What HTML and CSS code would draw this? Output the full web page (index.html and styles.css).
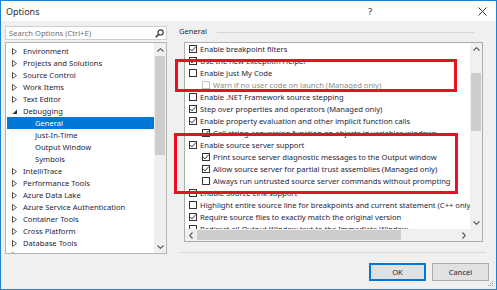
FILE: index.html
```html
<!DOCTYPE html>
<html>
<head>
  <title>Options</title>
  <link rel="stylesheet" href="styles.css">
</head>
<body>
  <div class="window">
    <div class="titlebar">
      <span class="title">Options</span>
      <span class="tb-help">?</span>
      <span class="tb-close">
        <svg width="9" height="9" viewBox="0 0 9 9"><path d="M0.5 0.5 L8.5 8.5 M8.5 0.5 L0.5 8.5" stroke="#333" stroke-width="1" fill="none"/></svg>
      </span>
    </div>

    <div class="main">
      <div class="left">
        <div class="search">
          <span class="search-text">Search Options (Ctrl+E)</span>
          <svg class="search-icon" width="9" height="9" viewBox="0 0 9 9">
            <circle cx="5.6" cy="3.4" r="2.6" stroke="#333" stroke-width="1.2" fill="none"/>
            <path d="M3.8 5.2 L0.8 8.2" stroke="#333" stroke-width="1.5"/>
          </svg>
        </div>
        <div class="tree">
          <div class="tree-rows">
            <div class="node"><svg class="arrow" width="5" height="7" viewBox="0 0 5 7"><path d="M0.5 0.5 L4.5 3.5 L0.5 6.5 Z" stroke="#444" stroke-width="0.9" fill="none"/></svg>Environment</div>
            <div class="node"><svg class="arrow" width="5" height="7" viewBox="0 0 5 7"><path d="M0.5 0.5 L4.5 3.5 L0.5 6.5 Z" stroke="#444" stroke-width="0.9" fill="none"/></svg>Projects and Solutions</div>
            <div class="node"><svg class="arrow" width="5" height="7" viewBox="0 0 5 7"><path d="M0.5 0.5 L4.5 3.5 L0.5 6.5 Z" stroke="#444" stroke-width="0.9" fill="none"/></svg>Source Control</div>
            <div class="node"><svg class="arrow" width="5" height="7" viewBox="0 0 5 7"><path d="M0.5 0.5 L4.5 3.5 L0.5 6.5 Z" stroke="#444" stroke-width="0.9" fill="none"/></svg>Work Items</div>
            <div class="node"><svg class="arrow" width="5" height="7" viewBox="0 0 5 7"><path d="M0.5 0.5 L4.5 3.5 L0.5 6.5 Z" stroke="#444" stroke-width="0.9" fill="none"/></svg>Text Editor</div>
            <div class="node"><svg class="arrow" width="5" height="7" viewBox="0 0 5 7"><path d="M5 1.5 L5 6 L0.5 6 Z" fill="#333"/></svg>Debugging</div>
            <div class="node child selected">General</div>
            <div class="node child">Just-In-Time</div>
            <div class="node child">Output Window</div>
            <div class="node child">Symbols</div>
            <div class="node"><svg class="arrow" width="5" height="7" viewBox="0 0 5 7"><path d="M0.5 0.5 L4.5 3.5 L0.5 6.5 Z" stroke="#444" stroke-width="0.9" fill="none"/></svg>IntelliTrace</div>
            <div class="node"><svg class="arrow" width="5" height="7" viewBox="0 0 5 7"><path d="M0.5 0.5 L4.5 3.5 L0.5 6.5 Z" stroke="#444" stroke-width="0.9" fill="none"/></svg>Performance Tools</div>
            <div class="node"><svg class="arrow" width="5" height="7" viewBox="0 0 5 7"><path d="M0.5 0.5 L4.5 3.5 L0.5 6.5 Z" stroke="#444" stroke-width="0.9" fill="none"/></svg>Azure Data Lake</div>
            <div class="node"><svg class="arrow" width="5" height="7" viewBox="0 0 5 7"><path d="M0.5 0.5 L4.5 3.5 L0.5 6.5 Z" stroke="#444" stroke-width="0.9" fill="none"/></svg>Azure Service Authentication</div>
            <div class="node"><svg class="arrow" width="5" height="7" viewBox="0 0 5 7"><path d="M0.5 0.5 L4.5 3.5 L0.5 6.5 Z" stroke="#444" stroke-width="0.9" fill="none"/></svg>Container Tools</div>
            <div class="node"><svg class="arrow" width="5" height="7" viewBox="0 0 5 7"><path d="M0.5 0.5 L4.5 3.5 L0.5 6.5 Z" stroke="#444" stroke-width="0.9" fill="none"/></svg>Cross Platform</div>
            <div class="node"><svg class="arrow" width="5" height="7" viewBox="0 0 5 7"><path d="M0.5 0.5 L4.5 3.5 L0.5 6.5 Z" stroke="#444" stroke-width="0.9" fill="none"/></svg>Database Tools</div>
            <div class="node"><svg class="arrow" width="5" height="7" viewBox="0 0 5 7"><path d="M0.5 0.5 L4.5 3.5 L0.5 6.5 Z" stroke="#444" stroke-width="0.9" fill="none"/></svg>Dependency Validation</div>
          </div>
          <div class="vscroll tree-scroll">
            <span class="sb-btn up"><svg width="7" height="4" viewBox="0 0 7 4"><path d="M0.5 3.5 L3.5 0.7 L6.5 3.5" stroke="#555" stroke-width="1.1" fill="none"/></svg></span>
            <span class="thumb"></span>
            <span class="sb-btn down"><svg width="7" height="4" viewBox="0 0 7 4"><path d="M0.5 0.5 L3.5 3.3 L6.5 0.5" stroke="#555" stroke-width="1.1" fill="none"/></svg></span>
          </div>
        </div>
      </div>

      <div class="right">
        <div class="group-head"><span>General</span><span class="group-line"></span></div>
        <div class="list">
          <div class="list-rows">
            <div class="opt"><span class="cb on"><svg width="8" height="8" viewBox="0 0 8 8"><path d="M1.2 4 L3 5.9 L6.8 1.6" stroke="#333" stroke-width="1" fill="none"/></svg></span>Enable breakpoint filters</div>
            <div class="opt"><span class="cb on"><svg width="8" height="8" viewBox="0 0 8 8"><path d="M1.2 4 L3 5.9 L6.8 1.6" stroke="#333" stroke-width="1" fill="none"/></svg></span>Use the new Exception Helper</div>
            <div class="opt"><span class="cb"></span>Enable Just My Code</div>
            <div class="opt sub off"><span class="cb"></span>Warn if no user code on launch (Managed only)</div>
            <div class="opt"><span class="cb"></span>Enable .NET Framework source stepping</div>
            <div class="opt"><span class="cb on"><svg width="8" height="8" viewBox="0 0 8 8"><path d="M1.2 4 L3 5.9 L6.8 1.6" stroke="#333" stroke-width="1" fill="none"/></svg></span>Step over properties and operators (Managed only)</div>
            <div class="opt"><span class="cb on"><svg width="8" height="8" viewBox="0 0 8 8"><path d="M1.2 4 L3 5.9 L6.8 1.6" stroke="#333" stroke-width="1" fill="none"/></svg></span>Enable property evaluation and other implicit function calls</div>
            <div class="opt sub"><span class="cb on"><svg width="8" height="8" viewBox="0 0 8 8"><path d="M1.2 4 L3 5.9 L6.8 1.6" stroke="#333" stroke-width="1" fill="none"/></svg></span>Call string-conversion function on objects in variables windows</div>
            <div class="opt"><span class="cb on"><svg width="8" height="8" viewBox="0 0 8 8"><path d="M1.2 4 L3 5.9 L6.8 1.6" stroke="#333" stroke-width="1" fill="none"/></svg></span>Enable source server support</div>
            <div class="opt sub"><span class="cb on"><svg width="8" height="8" viewBox="0 0 8 8"><path d="M1.2 4 L3 5.9 L6.8 1.6" stroke="#333" stroke-width="1" fill="none"/></svg></span>Print source server diagnostic messages to the Output window</div>
            <div class="opt sub"><span class="cb on"><svg width="8" height="8" viewBox="0 0 8 8"><path d="M1.2 4 L3 5.9 L6.8 1.6" stroke="#333" stroke-width="1" fill="none"/></svg></span>Allow source server for partial trust assemblies (Managed only)</div>
            <div class="opt sub"><span class="cb"></span>Always run untrusted source server commands without prompting</div>
            <div class="opt"><span class="cb"></span>Enable Source Link support</div>
            <div class="opt"><span class="cb"></span>Highlight entire source line for breakpoints and current statement (C++ only)</div>
            <div class="opt"><span class="cb on"><svg width="8" height="8" viewBox="0 0 8 8"><path d="M1.2 4 L3 5.9 L6.8 1.6" stroke="#333" stroke-width="1" fill="none"/></svg></span>Require source files to exactly match the original version</div>
            <div class="opt"><span class="cb"></span>Redirect all Output Window text to the Immediate Window</div>
          </div>
          <div class="vscroll list-vscroll">
            <span class="sb-btn up"><svg width="7" height="4" viewBox="0 0 7 4"><path d="M0.5 3.5 L3.5 0.7 L6.5 3.5" stroke="#555" stroke-width="1.1" fill="none"/></svg></span>
            <span class="thumb"></span>
            <span class="sb-btn down"><svg width="7" height="4" viewBox="0 0 7 4"><path d="M0.5 0.5 L3.5 3.3 L6.5 0.5" stroke="#555" stroke-width="1.1" fill="none"/></svg></span>
          </div>
          <div class="hscroll">
            <span class="sb-btn"><svg width="4" height="7" viewBox="0 0 4 7"><path d="M3.5 0.5 L0.7 3.5 L3.5 6.5" stroke="#555" stroke-width="1.1" fill="none"/></svg></span>
            <span class="thumb"></span>
            <span class="sb-btn"><svg width="4" height="7" viewBox="0 0 4 7"><path d="M0.5 0.5 L3.3 3.5 L0.5 6.5" stroke="#555" stroke-width="1.1" fill="none"/></svg></span>
          </div>
          <div class="corner"></div>
        </div>
        <div class="separator"></div>
        <div class="buttons">
          <button class="btn default">OK</button>
          <button class="btn">Cancel</button>
        </div>
      </div>
    </div>

    <!-- highlight boxes drawn over the list -->
    <div class="mark mark-jmc"></div>
    <div class="mark mark-source"></div>

    <svg class="grip" width="6" height="6" viewBox="0 0 6 6">
      <rect x="4" y="0" width="1" height="1" fill="#999"/>
      <rect x="2" y="2" width="1" height="1" fill="#999"/>
      <rect x="4" y="2" width="1" height="1" fill="#999"/>
      <rect x="0" y="4" width="1" height="1" fill="#999"/>
      <rect x="2" y="4" width="1" height="1" fill="#999"/>
      <rect x="4" y="4" width="1" height="1" fill="#999"/>
    </svg>
  </div>
</body>
</html>
```

FILE: styles.css
```css
* {
  box-sizing: border-box;
}
body {
  margin: 0;
  font-family: "Noto Sans", sans-serif;
  font-size: 7.6px;
  color: #1e1e3c;
}
.window {
  position: relative;
  width: 497px;
  height: 290px;
  border: 1px solid #1883d7;
  background: #f0f0f0;
  display: flex;
  flex-direction: column;
  overflow: hidden;
}
.titlebar {
  height: 20px;
  flex-shrink: 0;
  background: white;
  display: flex;
  align-items: center;
  padding-left: 5px;
}
.title {
  flex: 1;
  font-size: 9px;
  color: #2b2b2b;
}
.tb-help {
  width: 28px;
  text-align: center;
  font-size: 9.5px;
  color: #333;
  margin-right: 84px;
}
.tb-close {
  width: 28px;
  display: flex;
  justify-content: center;
}
.main {
  flex: 1;
  display: flex;
  padding: 5px 0 0 4px;
}
.left {
  width: 162px;
  display: flex;
  flex-direction: column;
  gap: 2px;
}
.search {
  height: 14px;
  background: white;
  border: 1px solid #cfcfcf;
  display: flex;
  align-items: center;
  padding: 0 2px 0 3px;
}
.search-text {
  flex: 1;
  color: #6d6d6d;
}
.tree {
  height: 212px;
  background: white;
  border: 1px solid #b5b5b5;
  display: flex;
  overflow: hidden;
}
.tree-rows {
  flex: 1;
  padding-top: 2px;
  overflow: hidden;
}
.node {
  height: 12px;
  line-height: 12px;
  margin-left: 1px;
  padding-left: 5px;
  display: flex;
  align-items: center;
  gap: 6px;
  white-space: nowrap;
}
.node.child {
  padding-left: 28px;
}
.node.selected {
  background: #0078d7;
  color: white;
}
.vscroll {
  width: 12px;
  background: #f0f0f0;
  display: flex;
  flex-direction: column;
  align-items: center;
}
.sb-btn {
  width: 12px;
  height: 12px;
  display: flex;
  align-items: center;
  justify-content: center;
  flex-shrink: 0;
}
.thumb {
  background: #cdcdcd;
}
.vscroll .thumb {
  width: 10px;
}
.tree-scroll .sb-btn.up {
  height: 14px;
}
.tree-scroll .thumb {
  height: 99px;
  margin-top: -1px;
}
.vscroll .sb-btn.down {
  margin-top: auto;
}
.right {
  width: 322px;
  display: flex;
  flex-direction: column;
}
.group-head {
  height: 16px;
  line-height: 11px;
  margin-left: 12px;
  margin-right: 15px;
  display: flex;
  align-items: flex-start;
  gap: 10px;
  color: #2b2b3b;
}
.group-line {
  flex: 1;
  height: 1px;
  margin-top: 6px;
  background: #d5d5d5;
}
.list {
  margin-left: 17px;
  width: 299px;
  height: 200px;
  background: white;
  border: 1px solid #adadad;
  display: grid;
  grid-template-columns: 285px 12px;
  grid-template-rows: 186px 12px;
}
.list-rows {
  overflow: hidden;
  padding-left: 4px;
}
.opt {
  height: 12px;
  display: flex;
  align-items: center;
  gap: 3px;
  white-space: nowrap;
}
.opt.sub {
  padding-left: 13px;
}
.opt.off {
  color: #8d8d8d;
}
.cb {
  width: 8px;
  height: 8px;
  border: 1px solid #333;
  background: white;
  flex-shrink: 0;
  position: relative;
}
.cb svg {
  position: absolute;
  left: -1px;
  top: -1px;
}
.opt.off .cb {
  border-color: #c4c4c4;
}
.list-vscroll .sb-btn.up {
  margin-bottom: 18px;
}
.list-vscroll .thumb {
  height: 58px;
}
.hscroll {
  display: flex;
  align-items: center;
  background: #f0f0f0;
}
.hscroll .thumb {
  width: 204px;
  height: 10px;
}
.hscroll .sb-btn:last-child {
  margin-left: auto;
}
.corner {
  background: #f0f0f0;
}
.separator {
  margin: 10px 3px 0 12px;
  height: 1px;
  background: #d8d8d8;
}
.buttons {
  margin-top: 10px;
  display: flex;
  justify-content: flex-end;
  gap: 6px;
}
.btn {
  width: 57px;
  height: 18px;
  padding: 0;
  font-family: "Noto Sans", sans-serif;
  font-size: 7.6px;
  color: #1e1e3c;
  background: #e1e1e1;
  border: 1px solid #adadad;
}
.btn.default {
  border-color: #0078d7;
  box-shadow: inset 0 0 0 1px #0078d7;
}
.mark {
  position: absolute;
  border: 3px solid #e81123;
}
.mark-jmc {
  left: 174px;
  top: 58px;
  width: 282px;
  height: 33px;
}
.mark-source {
  left: 173px;
  top: 132px;
  width: 284px;
  height: 61px;
}
.grip {
  position: absolute;
  right: 2px;
  bottom: 2px;
}
```
